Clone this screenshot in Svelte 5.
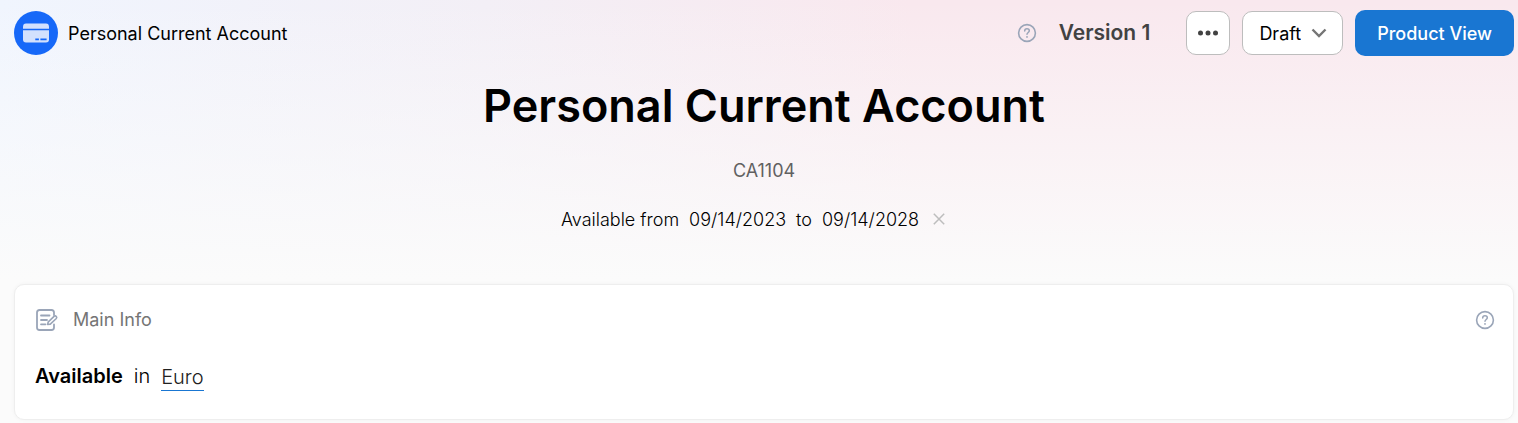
<script>
  let name = "Personal Current Account";
  let code = "CA1104";
  let from = "09/14/2023";
  let to = "09/14/2028";
  let status = "Draft";

  const statuses = ["Draft"];

  const clearEnd = () => {
    to = "";
  };
</script>

{#snippet help()}
  <svg width="20" height="20" viewBox="0 0 20 20" fill="none" stroke="#9aa5b8" stroke-linecap="round">
    <circle cx="10" cy="10" r="8.4" stroke-width="1.6" />
    <path d="M7.7 8C7.7 6.6 8.7 5.8 10 5.8S12.3 6.6 12.3 7.8C12.3 9.4 10 9.6 10 11.3" stroke-width="1.5" />
    <circle cx="10" cy="13.9" r="0.9" fill="#9aa5b8" stroke="none" />
  </svg>
{/snippet}

<div class="page">
  <header>
    <div class="product">
      <svg width="44" height="44" viewBox="0 0 44 44">
        <circle cx="22" cy="22" r="22" fill="#1668f8" />
        <path d="M9 17.8V16Q9 12.6 12 12.6H32Q35 12.6 35 16V17.8Z" fill="#d3e1fd" />
        <path d="M9 19.2H35V28.5Q35 31.5 32 31.5H12Q9 31.5 9 28.5Z" fill="#d3e1fd" />
        <path d="M21.3 28.4H24.9M26.4 28.4H32.6" stroke="#1668f8" stroke-width="1.9" />
      </svg>
      <span>{name}</span>
    </div>
    <div class="actions">
      <button class="icon" aria-label="Version help">{@render help()}</button>
      <span class="version">Version 1</span>
      <button class="more" aria-label="More actions">
        <svg width="20" height="20" viewBox="0 0 20 20" fill="#424242">
          <circle cx="2.5" cy="10" r="2.5" />
          <circle cx="10" cy="10" r="2.5" />
          <circle cx="17.5" cy="10" r="2.5" />
        </svg>
      </button>
      <div class="status">
        <select aria-label="Status" bind:value={status}>
          {#each statuses as item}
            <option>{item}</option>
          {/each}
        </select>
        <svg width="16" height="10" viewBox="0 0 16 10" fill="none" stroke="#757575" stroke-width="2.4">
          <path d="M1.5 1.5L8 8L14.5 1.5" />
        </svg>
      </div>
      <button class="view">Product View</button>
    </div>
  </header>

  <section class="hero">
    <h1>{name}</h1>
    <input class="code" aria-label="Product code" bind:value={code} />
    <div class="dates">
      <label for="from">Available from</label>
      <input id="from" bind:value={from} />
      <label for="to">to</label>
      <input id="to" bind:value={to} />
      <button class="icon" aria-label="Clear end date" on:click={clearEnd}>
        <svg width="12" height="12" viewBox="0 0 12 12" stroke="#bdbdbd" stroke-width="1.5">
          <path d="M0.8 0.8L11.2 11.2M11.2 0.8L0.8 11.2" />
        </svg>
      </button>
    </div>
  </section>

  <section class="card">
    <div class="card-head">
      <svg width="24" height="24" viewBox="0 0 24 24" fill="none" stroke="#9aa5b8" stroke-width="1.8" stroke-linecap="round" stroke-linejoin="round">
        <path d="M19 7V4.5Q19 2 16.5 2H4.5Q2 2 2 4.5V19.5Q2 22 4.5 22H16.5Q19 22 19 19.5V16.5" />
        <path d="M6 7.5H14.5M6 12H12M6 16.3H10.5" />
        <path d="M12.6 16.4L13.3 13.8L19.3 8.2Q20.4 7.5 21.3 8.5Q22.2 9.6 21.3 10.5L15.3 16.1Z" stroke-width="1.6" />
      </svg>
      <h2>Main Info</h2>
      <button class="icon" aria-label="Main info help">{@render help()}</button>
    </div>
    <p>
      <strong>Available</strong>
      <span>in</span>
      <a href="#currency">Euro</a>
    </p>
  </section>
</div>

<style>
  :global(body) {
    margin: 0;
    background: #fbfbfb;
  }
  .page {
    padding: 10px 4px 4px 14px;
    font-family: Inter, sans-serif;
    font-size: 18px;
    color: #000;
    background:
      linear-gradient(#fbfbfb00, #fbfbfb 280px),
      linear-gradient(to right, #f0f5fe, #f3eff6 32%, #f9e8ee 60%);
  }
  button, input, select {
    font: inherit;
    color: inherit;
    margin: 0;
    padding: 0;
    border: 0;
    background: none;
  }
  button, select {
    cursor: pointer;
  }
  svg {
    display: block;
    flex: none;
  }
  header {
    display: flex;
    justify-content: space-between;
    align-items: center;
    height: 46px;
  }
  .product, .actions {
    display: flex;
    align-items: center;
  }
  .product {
    gap: 10px;
  }
  .actions {
    gap: 12px;
  }
  .version {
    margin: 0 24px 0 10px;
    font-size: 21px;
    line-height: 26px;
    font-weight: 600;
    color: #424242;
  }
  .more {
    display: flex;
    justify-content: center;
    align-items: center;
    box-sizing: border-box;
    width: 44px;
    height: 44px;
    border: 1px solid #bdbdbd;
    border-radius: 10px;
    background: #fff;
  }
  .status {
    display: grid;
    align-items: center;
  }
  .status select, .status svg {
    grid-area: 1 / 1;
  }
  .status select {
    appearance: none;
    field-sizing: content;
    height: 44px;
    padding: 0 41px 0 16px;
    border: 1px solid #bdbdbd;
    border-radius: 10px;
    background: #fff;
  }
  .status svg {
    justify-self: end;
    margin-right: 16px;
    pointer-events: none;
  }
  .view {
    height: 46px;
    padding: 0 22px;
    border-radius: 10px;
    background: #1976d2;
    color: #fff;
    font-weight: 500;
  }
  .hero {
    display: flex;
    flex-direction: column;
    align-items: center;
    padding: 22px 0 52px;
  }
  h1 {
    margin: 0;
    font-size: 45px;
    line-height: 56px;
    font-weight: 600;
  }
  input {
    field-sizing: content;
    height: 24px;
  }
  .code {
    margin: 24px 0;
    padding: 0 8px;
    color: #616161;
  }
  .dates {
    display: flex;
    align-items: center;
    gap: 10px;
    height: 26px;
    font-weight: 300;
  }
  .dates .icon {
    margin: 0 22px 0 4px;
  }
  .card {
    padding: 23px 18px 28px 20px;
    border: 1px solid #eee;
    border-radius: 10px;
    background: #fff;
    box-shadow: 0 0 4px #0000000a;
  }
  .card-head {
    display: flex;
    align-items: center;
  }
  h2 {
    flex: 1;
    margin: 0 0 0 14px;
    font-size: 18px;
    line-height: 24px;
    font-weight: 400;
    color: #757575;
  }
  p {
    display: flex;
    align-items: flex-start;
    gap: 11px;
    margin: 31px 0 0;
    font-size: 20px;
    line-height: 26px;
    font-weight: 300;
  }
  strong {
    font-weight: 600;
  }
  a {
    padding-top: 1px;
    border-bottom: 1px solid #1976d2;
    color: #212121;
    text-decoration: none;
  }
</style>
